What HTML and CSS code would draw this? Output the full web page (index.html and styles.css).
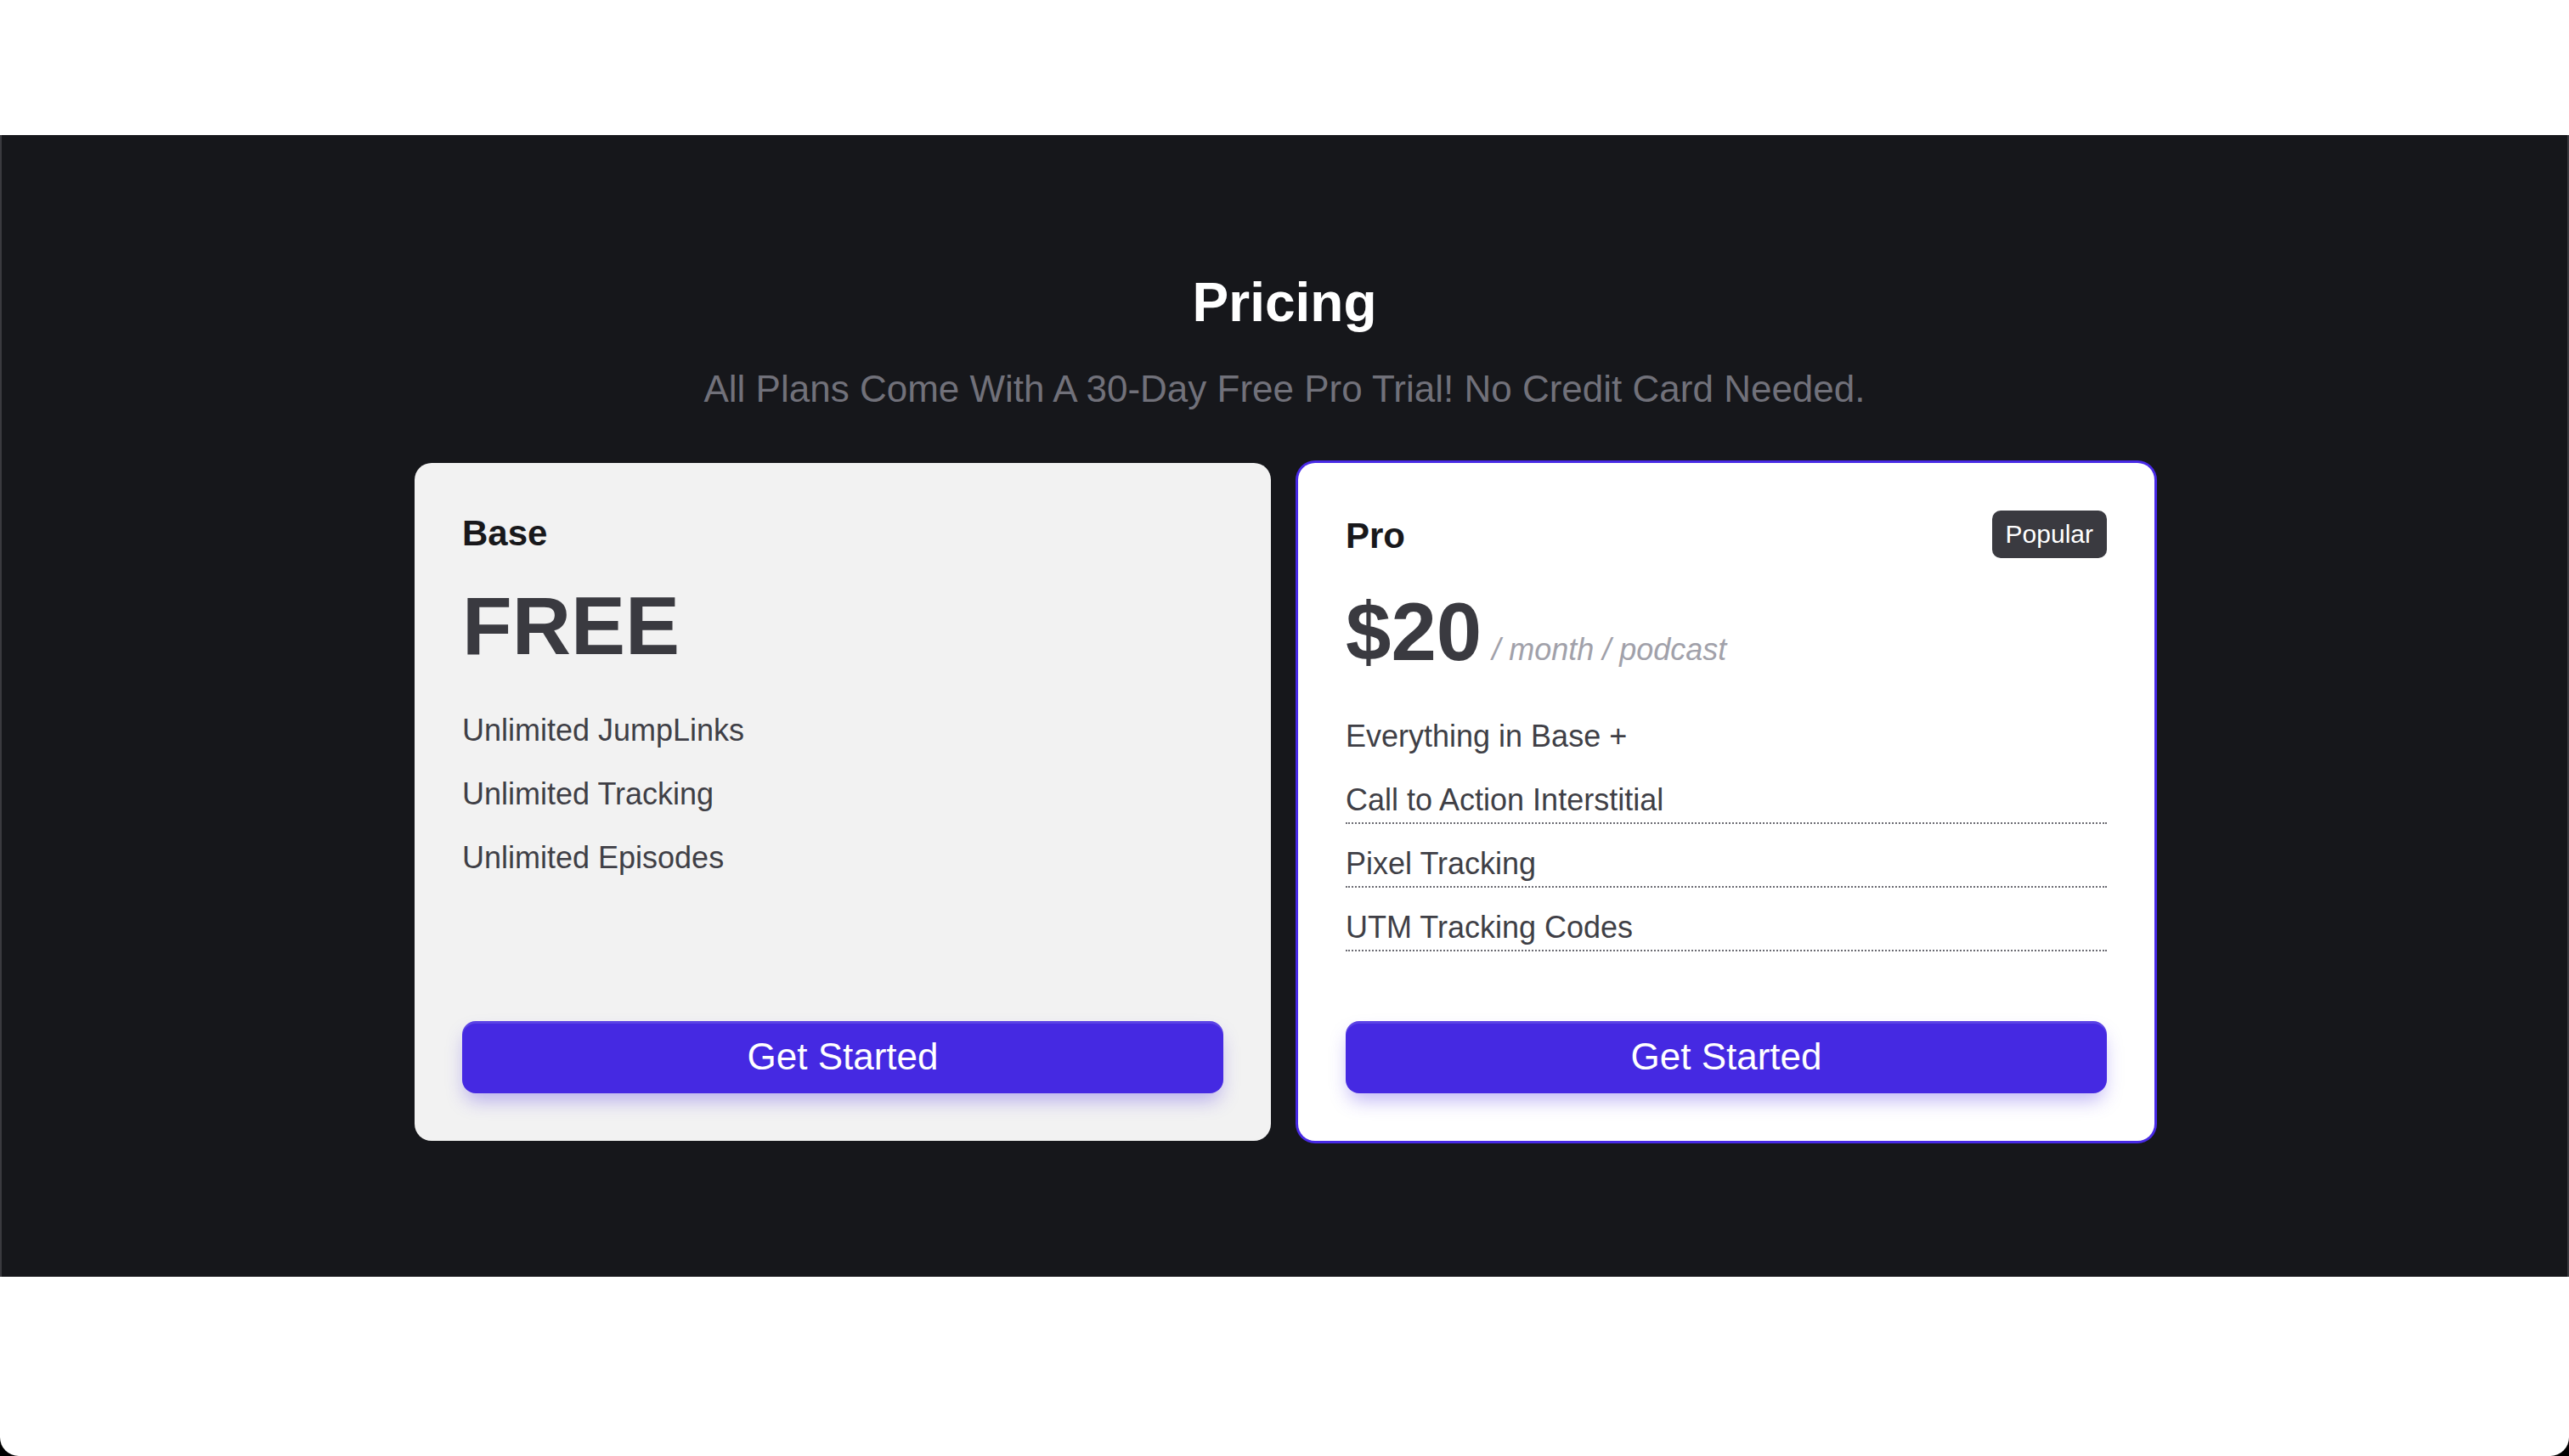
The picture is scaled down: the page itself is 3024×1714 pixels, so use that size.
FILE: index.html
```html
<!DOCTYPE html>
<html lang="en">
<head>
<meta charset="utf-8">
<title>Pricing</title>
<link rel="stylesheet" href="styles.css">
</head>
<body>
<div class="window">
  <section class="pricing">
    <h1 class="pricing-title">Pricing</h1>
    <p class="pricing-sub">All Plans Come With A 30-Day Free Pro Trial! No Credit Card Needed.</p>
    <div class="plans">
      <div class="plan plan-base">
        <div class="plan-head">
          <h2 class="plan-name">Base</h2>
        </div>
        <div class="plan-price"><span class="amount">FREE</span></div>
        <ul class="features">
          <li>Unlimited JumpLinks</li>
          <li>Unlimited Tracking</li>
          <li>Unlimited Episodes</li>
        </ul>
        <button class="cta">Get Started</button>
      </div>
      <div class="plan plan-pro">
        <div class="plan-head">
          <h2 class="plan-name">Pro</h2>
          <span class="badge">Popular</span>
        </div>
        <div class="plan-price"><span class="amount">$20</span><span class="unit">/ month / podcast</span></div>
        <ul class="features">
          <li>Everything in Base +</li>
          <li class="dotted">Call to Action Interstitial</li>
          <li class="dotted">Pixel Tracking</li>
          <li class="dotted">UTM Tracking Codes</li>
        </ul>
        <button class="cta">Get Started</button>
      </div>
    </div>
  </section>
</div>
</body>
</html>
```

FILE: styles.css
```css
html, body {
  margin: 0;
  padding: 0;
  height: 100%;
  overflow: hidden;
  background: #000;
}

.window {
  height: 1714px;
  background: #ffffff;
  border-radius: 0 0 22px 22px;
  padding-top: 159px;
  box-sizing: border-box;
  font-family: "Liberation Sans", Arial, Helvetica, sans-serif;
}

.pricing {
  background: #16171b;
  border-left: 2px solid #3a3a3f;
  border-right: 2px solid #3a3a3f;
  padding: 159px 0 160px;
  text-align: center;
}

.pricing-title {
  margin: 0;
  font-size: 64px;
  line-height: 1.2;
  font-weight: 700;
  color: #ffffff;
}

.pricing-sub {
  margin: 30px 0 0;
  font-size: 44px;
  line-height: 1.5;
  color: #71717a;
}

.plans {
  display: grid;
  grid-template-columns: 1fr 1fr;
  gap: 32px;
  max-width: 2048px;
  margin: 54px auto 0;
  text-align: left;
}

.plan {
  display: flex;
  flex-direction: column;
  padding: 56px;
  border-radius: 20px;
  background: #f2f2f2;
}

.plan-pro {
  background: #ffffff;
  box-shadow: 0 0 0 3px #482ae6;
}

.plan-head {
  display: flex;
  align-items: center;
  justify-content: space-between;
  min-height: 56px;
}

.plan-name {
  margin: 0;
  font-size: 42px;
  line-height: 1.2;
  font-weight: 700;
  color: #18181b;
}

.plan-base .plan-name {
  margin-top: -2px;
}

.plan-pro .plan-name {
  padding-top: 4px;
}

.badge {
  display: inline-flex;
  align-items: center;
  height: 56px;
  padding: 0 16px;
  box-sizing: border-box;
  border-radius: 10px;
  background: #3a3a40;
  color: #ffffff;
  font-size: 30px;
}

.plan-price {
  display: flex;
  align-items: baseline;
  margin-top: 32px;
}

.plan-pro .plan-price {
  margin-top: 39px;
}

.amount {
  font-size: 96px;
  line-height: 1;
  font-weight: 700;
  color: #3a3a40;
}

.unit {
  margin-left: 12px;
  font-size: 36px;
  line-height: 1.5;
  font-style: italic;
  color: #a1a1aa;
}

.features {
  list-style: none;
  margin: 53px 0 82px;
  padding: 0;
  display: flex;
  flex-direction: column;
  gap: 25px;
}

.features li {
  font-size: 36px;
  line-height: 44px;
  padding-bottom: 4px;
  border-bottom: 2px dotted transparent;
  color: #3f3f46;
}

.features li.dotted {
  border-bottom-color: #6b6b72;
}

.cta {
  margin-top: auto;
  height: 85px;
  width: 100%;
  border: none;
  border-radius: 16px;
  background: #4529e2;
  color: #ffffff;
  font-family: "Liberation Sans", Arial, Helvetica, sans-serif;
  font-size: 44px;
  box-shadow: inset 0 3px 0 rgba(255, 255, 255, 0.12), 0 12px 22px -4px rgba(69, 41, 226, 0.35);
  cursor: pointer;
}
```
